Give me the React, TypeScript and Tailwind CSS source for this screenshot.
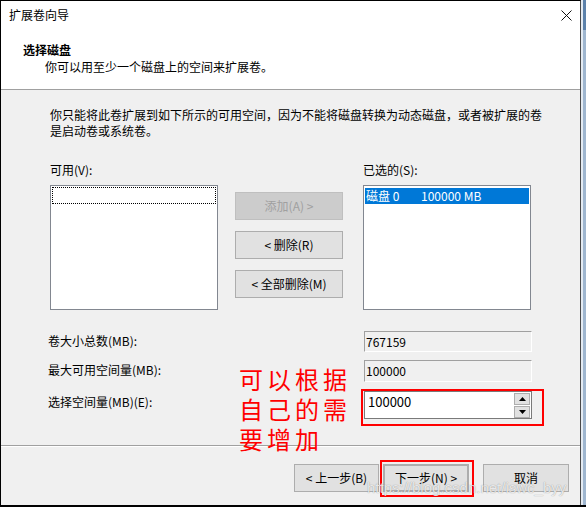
import React from "react";

function Btn({
  children,
  className = "",
}: {
  children: React.ReactNode;
  className?: string;
}) {
  return (
    <div
      className={
        "flex items-center justify-center h-[28px] border border-[#adadad] bg-[#e1e1e1] text-[12px] leading-[16px] text-black " +
        className
      }
    >
      {children}
    </div>
  );
}

export default function App() {
  return (
    <div className="relative w-[586px] h-[507px] flex bg-white border-b-2 border-black font-['Noto_Sans_CJK_SC','Noto_Sans',sans-serif] text-[12px] text-black overflow-hidden">
      {/* dialog */}
      <div className="w-[581px] h-full flex flex-col border-l border-t border-r border-l-black border-t-black border-r-[#4a4a4a]">
        {/* header */}
        <div className="h-[89px] shrink-0 bg-white border-b border-[#a0a0a0] flex flex-col">
          <div className="h-[28px] flex items-center justify-between pl-[8px] pr-[8px]">
            <span className="leading-[16px]">扩展卷向导</span>
            <svg width="11" height="11" viewBox="0 0 11 11">
              <path d="M0.5 0.5 L10.5 10.5 M10.5 0.5 L0.5 10.5" stroke="#111" strokeWidth="1" fill="none" />
            </svg>
          </div>
          <div className="mt-[13px] pl-[22px] font-bold leading-[16px]">选择磁盘</div>
          <div className="mt-[1px] pl-[44px] leading-[16px]">你可以用至少一个磁盘上的空间来扩展卷。</div>
        </div>

        {/* body */}
        <div className="flex-1 bg-[#f0f0f0] border-b border-[#a0a0a0] flex flex-col">
          <p className="pt-[17px] pl-[49px] leading-[16px] whitespace-nowrap">
            你只能将此卷扩展到如下所示的可用空间，因为不能将磁盘转换为动态磁盘，或者被扩展的卷
            <br />
            是启动卷或系统卷。
          </p>

          <div className="mt-[23px] pl-[49px] grid grid-cols-[168px_145px_168px] leading-[16px]">
            <span>可用(V):</span>
            <span />
            <span>已选的(S):</span>
          </div>

          <div className="mt-[7px] pl-[49px] grid grid-cols-[168px_145px_168px]">
            <div className="h-[125px] bg-white border border-[#828790] px-[1px] pt-[1px]">
              <div className="h-[17px] border border-dotted border-black" />
            </div>
            <div className="pl-[17px] pt-[7px] flex flex-col gap-[11px]">
              <div className="w-[108px] h-[28px] flex items-center justify-center border border-[#bfbfbf] bg-[#cccccc] text-[#a0a0a0] leading-[16px]">
                添加(A) &gt;
              </div>
              <Btn className="w-[108px]">&lt; 删除(R)</Btn>
              <Btn className="w-[108px]">&lt; 全部删除(M)</Btn>
            </div>
            <div className="h-[125px] bg-white border border-[#828790] px-[1px] pt-[2px]">
              <div className="h-[16px] bg-[#0078d7] text-white flex items-center leading-[16px] pl-[1px]">
                <span className="w-[55px]">磁盘 0</span>
                <span>100000 MB</span>
              </div>
            </div>
          </div>

          <div className="mt-[21px] pl-[47px] grid grid-cols-[316px_168px] items-center">
            <span className="leading-[16px] mb-[2px]">卷大小总数(MB):</span>
            <div className="h-[21px] border border-[#a0a0a0] border-r-white border-b-white bg-[#f0f0f0] flex items-center pl-[1px] leading-[16px]">
              767159
            </div>
          </div>
          <div className="mt-[8px] pl-[47px] grid grid-cols-[316px_168px] items-center">
            <span className="leading-[16px] mb-[2px]">最大可用空间量(MB):</span>
            <div className="h-[22px] border border-[#a0a0a0] border-r-white border-b-white bg-[#f0f0f0] flex items-center pl-[1px] leading-[16px]">
              100000
            </div>
          </div>
          <div className="mt-[9px] pl-[47px] grid grid-cols-[316px_168px] items-center">
            <span className="leading-[16px] mb-[6px]">选择空间量(MB)(E):</span>
            <div className="h-[28px] border border-[#7a7a7a] bg-white flex justify-between items-start">
              <span className="pl-[3px] pt-[2px] text-[13px] leading-[16px]">100000</span>
              <div className="flex flex-col gap-[1px] pt-[1px] pr-[1px]">
                <div className="w-[16px] h-[12px] bg-[#e1e1e1] border border-[#adadad] flex items-center justify-center">
                  <svg width="7" height="4" viewBox="0 0 7 4">
                    <path d="M3.5 0 L7 4 L0 4 Z" fill="#000" />
                  </svg>
                </div>
                <div className="w-[16px] h-[12px] bg-[#e1e1e1] border border-[#adadad] flex items-center justify-center">
                  <svg width="7" height="4" viewBox="0 0 7 4">
                    <path d="M0 0 L7 0 L3.5 4 Z" fill="#000" />
                  </svg>
                </div>
              </div>
            </div>
          </div>
        </div>

        {/* footer */}
        <div className="h-[59px] shrink-0 bg-[#f0f0f0] border-t border-white flex justify-end items-start pt-[17px] pr-[11px]">
          <Btn className="w-[85px]">&lt; 上一步(B)</Btn>
          <Btn className="w-[86px] ml-[4px] border-2 border-[#0078d7]">下一步(N) &gt;</Btn>
          <Btn className="w-[86px] ml-[14px]">取消</Btn>
        </div>
      </div>

      {/* right edge of window behind */}
      <div className="flex-1 h-full flex">
        <div className="w-[2px] h-full bg-[#e4ebf3]" />
        <div className="flex-1 h-full flex flex-col">
          <div className="h-[30px] bg-[#5d82ab]" />
          <div className="flex-1 bg-[#9fb6cf]" />
        </div>
      </div>

      {/* annotations */}
      <div className="absolute left-[239px] top-[364px] text-[24px] leading-[30px] tracking-[4px] text-[#ff0000] whitespace-nowrap font-['Noto_Sans_CJK_SC',sans-serif]">
        可以根据
        <br />
        自己的需
        <br />
        要增加
      </div>
      <div className="absolute left-[361px] top-[389px] w-[183px] h-[37px] border-2 border-[#ff0000]" />
      <div className="absolute left-[380px] top-[460px] w-[94px] h-[37px] border-2 border-[#ff0000]" />
      <div className="absolute left-[367px] top-[478px] text-[15px] leading-[20px] font-['Liberation_Sans',sans-serif] text-white/80 [text-shadow:0_0_1px_rgba(0,0,0,0.45)] whitespace-nowrap">
        https://blog.csdn.net/iswc_byy
      </div>
    </div>
  );
}
